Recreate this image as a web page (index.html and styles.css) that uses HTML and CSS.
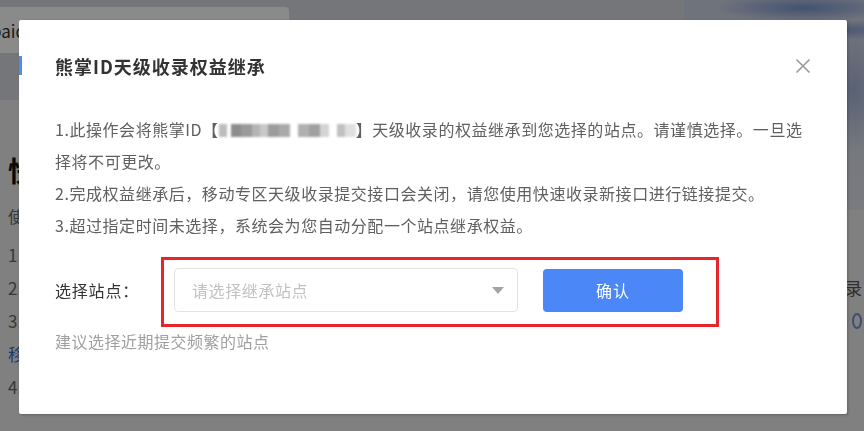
FILE: index.html
```html
<!DOCTYPE html>
<html lang="zh-CN">
<head>
  <meta charset="UTF-8" />
  <meta name="viewport" content="width=device-width, initial-scale=1.0"/>
  <title>熊掌ID天级收录权益继承</title>
  <link rel="stylesheet" href="styles.css">
</head>
<body>

  <div class="page">
    <div class="banner">
      <div class="crumb"><span class="crumb-text">baidu.com</span></div>
      <div class="clouds"></div>
    </div>
    <div class="content">
      <h2 class="page-title">快速收录</h2>
      <p class="intro">使用说明</p>
      <ul class="rules">
        <li><span>1.</span></li>
        <li><span>2.</span><span class="tail">收录</span></li>
        <li><span>3.</span><span class="tail faint">券 <i class="dot"></i></span></li>
        <li><span class="link">移</span></li>
        <li><span>4.</span></li>
      </ul>
    </div>
  </div>

  <!-- Modal: inherit rights -->
  <div class="mask">
    <div class="dialog">
      <span class="side-mark"></span>
      <div class="dialog-header">
        <h3 class="dialog-title">熊掌ID天级收录权益继承</h3>
        <button class="close-btn" aria-label="关闭">
          <svg width="16" height="16" viewBox="0 0 16 16">
            <path d="M1.5 1.5 L14.5 14.5 M14.5 1.5 L1.5 14.5" stroke="#9a9a9a" stroke-width="1.6" fill="none"/>
          </svg>
        </button>
      </div>

      <div class="dialog-body">
        <p>1.此操作会将熊掌ID【<span class="redact"></span>】天级收录的权益继承到您选择的站点。请谨慎选择。一旦选择将不可更改。</p>
        <p>2.完成权益继承后，移动专区天级收录提交接口会关闭，请您使用快速收录新接口进行链接提交。</p>
        <p>3.超过指定时间未选择，系统会为您自动分配一个站点继承权益。</p>
      </div>

      <div class="form-row">
        <label class="form-label">选择站点：</label>
        <div class="controls">
          <div class="select">
            <span class="placeholder">请选择继承站点</span>
            <span class="caret"></span>
          </div>
          <button class="btn">确认</button>
          <span class="mark-box"></span>
        </div>
      </div>

      <p class="hint">建议选择近期提交频繁的站点</p>
    </div>
  </div>

</body>
</html>
```

FILE: styles.css
```css
body {
  margin: 0;
  font-family: "Noto Sans CJK SC", "Noto Sans", sans-serif;
  background-color: #e9e9e9;
  overflow: hidden;
}

/* page behind the mask */
.page {
  height: 431px;
}

.banner {
  position: relative;
  height: 100px;
  background-color: #d6d8df;
  padding-top: 7px;
  box-sizing: border-box;
}

.crumb {
  width: 289px;
  height: 46px;
  background-color: #fbfbfb;
  border-radius: 0 4px 4px 0;
  display: flex;
  align-items: center;
  overflow: hidden;
  position: relative;
  z-index: 1;
}

.crumb-text {
  margin-left: -9px;
  font-size: 17px;
  color: #333;
}

.clouds {
  position: absolute;
  top: 0;
  right: 0;
  width: 180px;
  height: 210px;
  background:
    radial-gradient(ellipse 90px 14px at 120px 8px, rgba(70, 110, 190, 0.6), transparent),
    radial-gradient(ellipse 70px 10px at 160px 30px, rgba(70, 110, 190, 0.5), transparent),
    radial-gradient(ellipse 30px 60px at 170px 90px, rgba(90, 120, 190, 0.4), transparent),
    linear-gradient(180deg, #cad1e2, #dde0e8);
}

.content {
  padding: 52px 0 0 8px;
}

.page-title {
  margin: 0;
  font-size: 28px;
  line-height: 36px;
  color: #111;
}

.intro {
  margin: 16px 0 0;
  font-size: 16px;
  line-height: 24px;
  color: #666;
}

.rules {
  list-style: none;
  margin: 10px 0 0;
  padding: 0;
}

.rules li {
  display: flex;
  justify-content: space-between;
  height: 33px;
  align-items: center;
  font-size: 17px;
  color: #666;
}

.tail {
  color: #555;
  padding-right: 2px;
}

.faint {
  color: #999;
  display: flex;
  align-items: center;
  gap: 4px;
}

.dot {
  display: inline-block;
  width: 6px;
  height: 12px;
  border-radius: 50%;
  border: 2px solid #6f8fcf;
}

.link {
  color: #3a64c8;
}

/* Modal */
.mask {
  position: fixed;
  top: 0;
  left: 0;
  width: 100vw;
  height: 100vh;
  background-color: rgba(0, 0, 0, 0.45);
  z-index: 1000;
}

.dialog {
  position: relative;
  margin: 20px 0 0 19px;
  width: 828px;
  height: 394px;
  box-sizing: border-box;
  padding: 34px 36px 0;
  background-color: white;
  border-radius: 2px;
  box-shadow: 1px 1px 3px rgba(0, 0, 0, 0.25);
}

.side-mark {
  position: absolute;
  left: 0;
  top: 36px;
  width: 3px;
  height: 19px;
  background-color: #4f8bf5;
}

.dialog-header {
  display: flex;
  justify-content: space-between;
  align-items: center;
  height: 24px;
}

.dialog-title {
  margin: 0;
  font-size: 18px;
  letter-spacing: 1px;
  line-height: 24px;
  font-weight: bold;
  color: #333;
}

.close-btn {
  width: 16px;
  height: 16px;
  padding: 0;
  border: none;
  background: none;
  cursor: pointer;
  display: flex;
}

.dialog-body {
  margin-top: 35px;
}

.dialog-body p {
  margin: 0;
  font-size: 16px;
  letter-spacing: 0.55px;
  line-height: 32px;
  color: #606060;
}

.redact {
  display: inline-block;
  width: 137px;
  height: 13px;
  vertical-align: -1px;
  background: linear-gradient(90deg,
    #bdbdbd 0 6%, #fff 6% 9%, #8c8c8c 9% 16%, #9a9a9a 16% 24%,
    #b4b4b4 24% 30%, #c8c8c8 30% 36%, #9c9c9c 36% 44%, #aaaaaa 44% 52%,
    #fff 52% 58%, #b0b0b0 58% 66%, #a0a0a0 66% 74%, #d4d4d4 74% 80%,
    #fff 80% 86%, #c0c0c0 86% 92%, #e0e0e0 92% 100%);
  filter: blur(1px);
}

.form-row {
  display: flex;
  align-items: center;
  margin-top: 27px;
}

.form-label {
  width: 119px;
  font-size: 16px;
  letter-spacing: 0.8px;
  color: #333;
}

.controls {
  position: relative;
  display: flex;
  align-items: center;
  gap: 25px;
}

.select {
  width: 344px;
  height: 44px;
  box-sizing: border-box;
  border: 1px solid #e3e3e3;
  border-radius: 4px;
  padding: 0 13px 0 17px;
  display: flex;
  align-items: center;
  justify-content: space-between;
}

.placeholder {
  font-size: 16px;
  letter-spacing: 0.6px;
  color: #c2c2c2;
}

.caret {
  width: 0;
  height: 0;
  border-left: 6px solid transparent;
  border-right: 6px solid transparent;
  border-top: 7px solid #a3a3a3;
}

.btn {
  width: 140px;
  height: 43px;
  background-color: #4b87f7;
  color: white;
  border: none;
  border-radius: 4px;
  font-family: inherit;
  font-size: 16px;
  letter-spacing: 1px;
  cursor: pointer;
}

/* red annotation frame drawn over the controls */
.mark-box {
  position: absolute;
  top: -11px;
  left: -13px;
  right: -36px;
  bottom: -15px;
  border: 3px solid #e6262a;
  pointer-events: none;
}

.hint {
  margin: 17px 0 0;
  font-size: 16px;
  letter-spacing: 0.5px;
  line-height: 24px;
  color: #a0a0a0;
}
```
